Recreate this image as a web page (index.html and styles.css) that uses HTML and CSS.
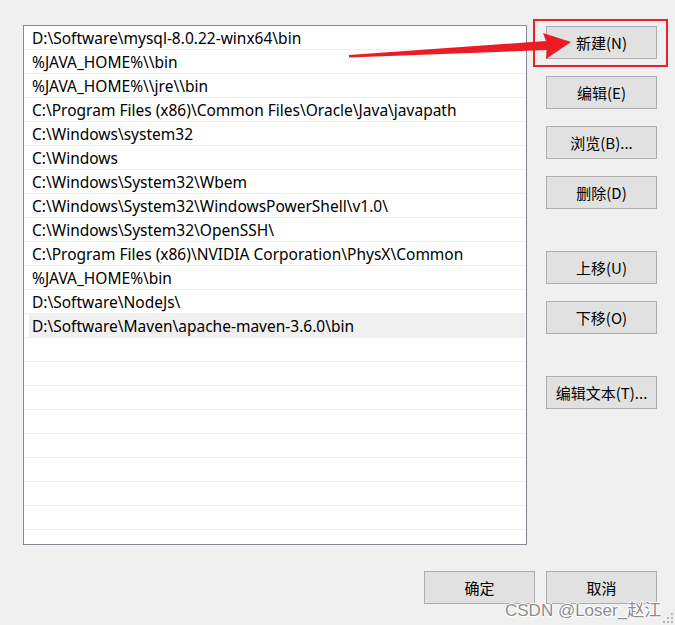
FILE: index.html
```html
<!DOCTYPE html>
<html lang="zh-CN">
<head>
<meta charset="utf-8">
<title>编辑环境变量</title>
<link rel="stylesheet" href="styles.css">
</head>
<body>
<div class="dialog">
  <div class="main">
    <div class="listbox">
      <div class="row">D:\Software\mysql-8.0.22-winx64\bin</div>
      <div class="row">%JAVA_HOME%\\bin</div>
      <div class="row">%JAVA_HOME%\\jre\\bin</div>
      <div class="row">C:\Program Files (x86)\Common Files\Oracle\Java\javapath</div>
      <div class="row">C:\Windows\system32</div>
      <div class="row">C:\Windows</div>
      <div class="row">C:\Windows\System32\Wbem</div>
      <div class="row">C:\Windows\System32\WindowsPowerShell\v1.0\</div>
      <div class="row">C:\Windows\System32\OpenSSH\</div>
      <div class="row">C:\Program Files (x86)\NVIDIA Corporation\PhysX\Common</div>
      <div class="row">%JAVA_HOME%\bin</div>
      <div class="row">D:\Software\NodeJs\</div>
      <div class="row selected"><span class="sel">D:\Software\Maven\apache-maven-3.6.0\bin</span></div>
      <div class="row"></div>
      <div class="row"></div>
      <div class="row"></div>
      <div class="row"></div>
      <div class="row"></div>
      <div class="row"></div>
      <div class="row"></div>
      <div class="row"></div>
    </div>
    <div class="side">
      <div class="group">
        <button class="btn">新建(N)</button>
        <button class="btn">编辑(E)</button>
        <button class="btn">浏览(B)...</button>
        <button class="btn">删除(D)</button>
      </div>
      <div class="group">
        <button class="btn">上移(U)</button>
        <button class="btn">下移(O)</button>
      </div>
      <div class="group">
        <button class="btn">编辑文本(T)...</button>
      </div>
    </div>
  </div>
  <div class="footer">
    <button class="btn">确定</button>
    <button class="btn">取消</button>
  </div>
</div>
<div class="highlight-box"></div>
<svg class="arrow" width="675" height="100" viewBox="0 0 675 100" aria-hidden="true">
  <polygon points="349,55 546,41 543,33 571,42 546,59 547,50 349,57.5" fill="#ed1c24"/>
</svg>
<div class="watermark">CSDN @Loser_赵江</div>
<svg class="grip" width="12" height="12" viewBox="0 0 12 12" aria-hidden="true">
  <rect x="9" y="1" width="2" height="2" fill="#b8b8b8"/>
  <rect x="5" y="5" width="2" height="2" fill="#b8b8b8"/>
  <rect x="9" y="5" width="2" height="2" fill="#b8b8b8"/>
  <rect x="1" y="9" width="2" height="2" fill="#b8b8b8"/>
  <rect x="5" y="9" width="2" height="2" fill="#b8b8b8"/>
  <rect x="9" y="9" width="2" height="2" fill="#b8b8b8"/>
</svg>
</body>
</html>
```

FILE: styles.css
```css
html, body {
  margin: 0;
  padding: 0;
  background: #f0f0f0;
  width: 675px;
  height: 625px;
  overflow: hidden;
  position: relative;
  font-family: "Noto Sans", "Noto Sans CJK SC", sans-serif;
  color: #000;
}

.dialog {
  padding: 25px 0 0 23px;
}

.main {
  display: flex;
  gap: 19px;
}

.listbox {
  width: 502px;
  height: 518px;
  border: 1px solid #828790;
  background: #fff;
  overflow: hidden;
}

.row {
  height: 21px;
  padding-top: 2px;
  border-bottom: 1px solid #f0f0f0;
  font-size: 15.5px;
  line-height: 21px;
  padding-left: 8px;
  white-space: nowrap;
}

.row.selected {
  padding-left: 5px;
  padding-top: 0;
  height: 23px;
}

.row.selected .sel {
  display: block;
  background: #f0f0f0;
  padding-left: 3px;
  padding-top: 2px;
  line-height: 21px;
  margin-right: 1px;
  height: 22px;
}

.side {
  display: flex;
  flex-direction: column;
  gap: 42px;
  padding-top: 1px;
}

.group {
  display: flex;
  flex-direction: column;
  gap: 17px;
}

.btn {
  width: 111px;
  height: 33px;
  margin: 0;
  padding: 0;
  background: #e1e1e1;
  border: 1px solid #adadad;
  font-family: "Noto Sans CJK SC", "Noto Sans", sans-serif;
  font-size: 15px;
  color: #000;
}

.footer {
  display: flex;
  gap: 11px;
  padding: 26px 0 0 401px;
}

.highlight-box {
  position: absolute;
  left: 533px;
  top: 19px;
  width: 131px;
  height: 44px;
  border: 2px solid #e8212b;
}

.arrow {
  position: absolute;
  left: 0;
  top: 0;
}

.watermark {
  position: absolute;
  left: 505px;
  top: 596px;
  font-family: "Liberation Sans", "Noto Sans CJK SC", sans-serif;
  font-size: 17px;
  color: #8c8c8c;
  text-shadow: 0 0 1px #fff, 1px 0 0 #fff, -1px 0 0 #fff, 0 1px 0 #fff, 0 -1px 0 #fff;
  white-space: nowrap;
}

.grip {
  position: absolute;
  left: 662px;
  top: 612px;
}
```
